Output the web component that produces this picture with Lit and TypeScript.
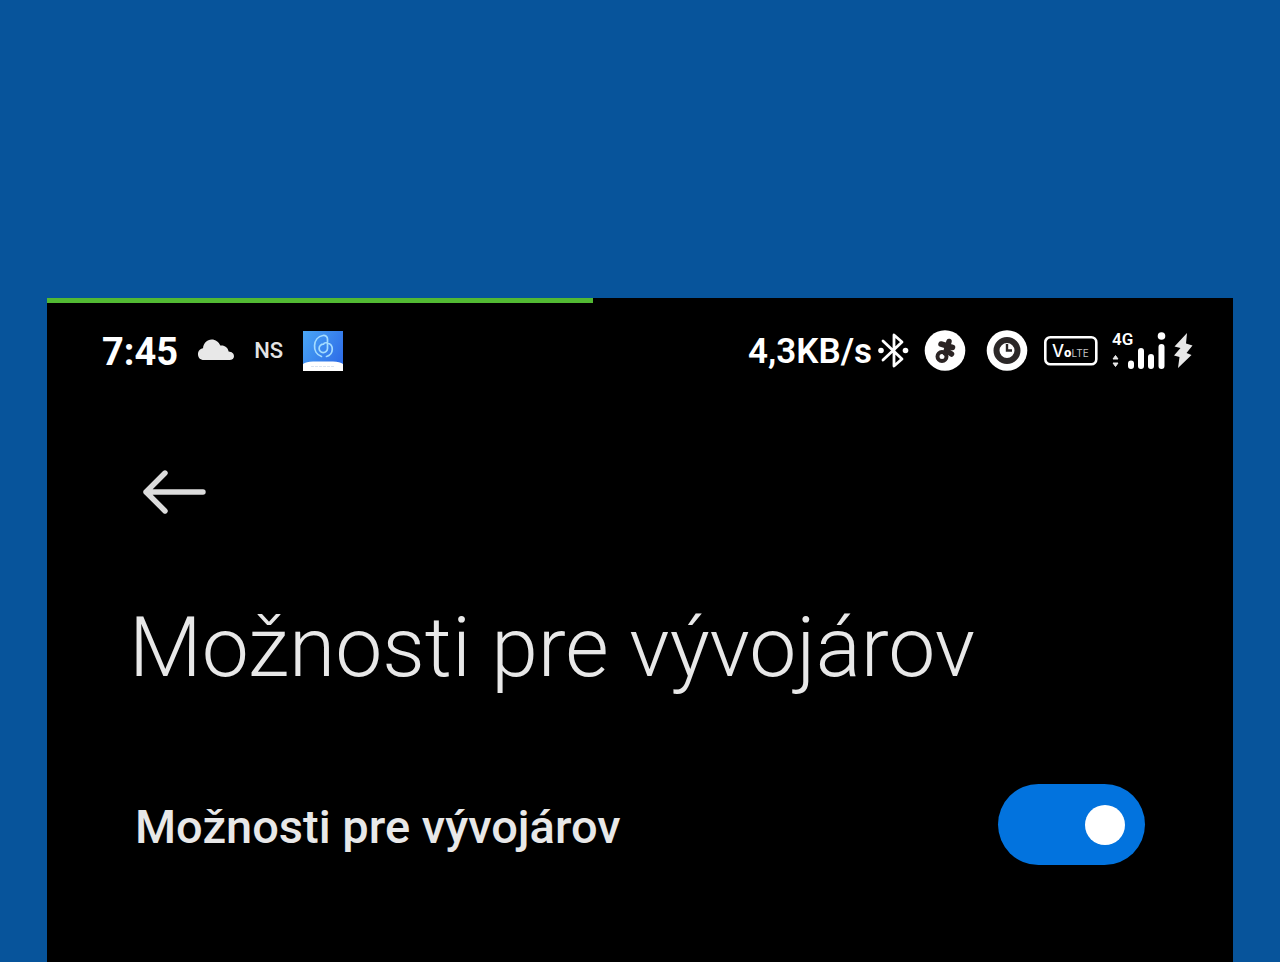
import { LitElement, html, css } from "lit";
import { customElement, state } from "lit/decorators.js";

@customElement("status-bar")
class StatusBar extends LitElement {
  static styles = css`
    :host { display: block; }
    .bar { display: flex; justify-content: space-between; align-items: center; height: 44px; padding: 0 40px 0 55px; color: #fff; }
    .group { display: flex; align-items: center; }
    .time, .speed { padding-top: 2px; line-height: 44px; white-space: nowrap; }
    .time { font-size: 38px; font-weight: 700; }
    .speed { font-size: 35px; font-weight: 600; }
    .ns { font-size: 22px; line-height: 44px; font-weight: 500; color: #e4e4e4; }
    .left { gap: 20px; }
    svg { display: block; flex: none; }
    .bt { margin-left: 5px; }
    .disc { margin-left: 15px; }
    .clock { margin-left: 20px; }
    .volte { margin-left: 16px; }
    .signal { margin-left: 14px; }
    .bolt { margin-left: 6px; }
    .network { font-family: Roboto, sans-serif; }
    .badge { font-family: Inter, sans-serif; }
  `;
  render() {
    return html`
      <div class="bar">
        <div class="group left">
          <span class="time">7:45</span>
          <svg width="36" height="24" viewBox="1 0 36 24" aria-hidden="true">
            <path fill="#e8e8e8" d="M7 21C3 21 1 18.500 1 15.200C1 12 3 9.600 6 9.200C6.500 4.400 10 .6 14.700 .6C18.500 .6 21.800 3 23.300 6.600C27.500 6 31 8.600 31.600 12.600C34.800 12.800 37 14.600 37 17.200C37 19.600 35.200 21 32.500 21Z"/>
          </svg>
          <span class="ns">NS</span>
          <svg width="40" height="40" viewBox="0 0 40 40" aria-hidden="true">
            <defs><linearGradient id="sky" x1="0" y1="0" x2="1" y2="0.600"><stop offset="0" stop-color="#4aa6f5"/><stop offset="1" stop-color="#2f6fe8"/></linearGradient></defs>
            <rect width="40" height="40" fill="url(#sky)"/>
            <path fill="#fff" d="M0 33Q3 30.500 10 30.500H30Q37 30.500 40 33V40H0Z"/>
            <path fill="none" stroke="#a4dcff" stroke-width="1.700" stroke-linecap="round" d="M18.500 25.500C8.500 22.500 9.500 6 20 4.500C22.500 4.200 24.500 5.500 24.500 8V17.500A4.200 4.200 0 1 1 20.500 13.200C21 11.800 22.500 11.500 24.500 12C31 13.500 31 23.500 23.500 25.500"/>
            <path stroke="#dbe4f0" stroke-width="1" stroke-dasharray="3 1" d="M8 35.500H32"/>
          </svg>
        </div>
        <div class="group">
          <span class="speed">4,3KB/s</span>
          <svg class="bt" width="32" height="38" viewBox="0 0 32 38" aria-hidden="true">
            <path fill="none" stroke="#fff" stroke-width="2.800" stroke-linejoin="round" stroke-linecap="round" d="M6 9L25 27L17 34V3L25 10L6 28"/>
            <circle cx="4" cy="18.500" r="2.800" fill="#fff"/><circle cx="28.500" cy="18.500" r="2.800" fill="#fff"/>
          </svg>
          <svg class="disc" width="42" height="42" viewBox="0 0 42 42" aria-hidden="true">
            <circle cx="21" cy="20.500" r="20.300" fill="#fff"/>
            <g fill="none" stroke="#2b2424" stroke-linecap="round">
              <circle cx="18" cy="26.500" r="4.500" stroke-width="4"/>
              <path stroke-width="5.500" d="M21.500 23L25 11.500M17 14L28.500 17.500M23 21L27.500 24"/>
            </g>
          </svg>
          <svg class="clock" width="42" height="42" viewBox="0 0 42 42" aria-hidden="true">
            <circle cx="21" cy="20.500" r="20.300" fill="#fff"/>
            <circle cx="21" cy="20.500" r="10.500" fill="none" stroke="#2b2727" stroke-width="6"/>
            <path fill="none" stroke="#2b2727" stroke-width="2.400" d="M21 14V20.500H26"/>
          </svg>
          <svg class="volte" width="54" height="32" viewBox="0 0 54 32">
            <rect x="1.300" y="2.300" width="51" height="27" rx="5" fill="none" stroke="#fff" stroke-width="2.600"/>
            <text class="badge" x="8" y="22" fill="#fff" font-size="17" font-weight="500">V<tspan font-size="12" font-weight="800">o</tspan><tspan fill="#c4c4c4" font-size="10" font-weight="400">LTE</tspan></text>
          </svg>
          <svg class="signal" width="55" height="46" viewBox="0 -3 55 46">
            <text class="network" x="0" y="14" font-size="17" font-weight="600" fill="#fff">4G</text>
            <path fill="#e8e8e8" stroke="#e8e8e8" stroke-linejoin="round" d="M1 28L3.500 24.500L6 28ZM1 32L3.500 35.500L6 32Z"/>
            <g stroke="#fff" stroke-width="6" stroke-linecap="round"><path d="M19 32.500V35M29 20V35M39 26V35M49.500 16V35"/></g>
            <circle cx="49.500" cy="5" r="3.800" fill="#fff"/>
          </svg>
          <svg class="bolt" width="20" height="36" viewBox="0 0 20 36" aria-hidden="true">
            <path fill="#e8e8e8" d="M14 0L1.500 13.500L7.500 15L1 22.500L6.500 24L5 35L18.500 22L13.500 20L19.500 12.500L13 10.500Z"/>
          </svg>
        </div>
      </div>`;
  }
}

@customElement("app-root")
class AppRoot extends LitElement {
  static styles = css`
    :host { display: block; font-family: Roboto, sans-serif; }
    .stage { box-sizing: border-box; min-height: 100vh; padding: 298px 47px 0; background: #07549b; display: flex; }
    .screen { flex: 1; min-width: 0; background: #000; color: #e8e8e8; }
    .progress { width: 46%; height: 5px; background: #52b933; }
    .status { padding-top: 26px; }
    .content { padding: 95px 88px 0 82px; }
    .back { display: block; margin-left: 11px; padding: 0; border: 0; background: none; color: #dcdcdc; cursor: pointer; }
    .back svg { display: block; }
    h1 { margin: 82px 0 0; font-size: 84px; line-height: 100px; font-weight: 300; }
    .row { display: flex; justify-content: space-between; align-items: center; margin-top: 86px; padding-left: 6px; }
    .label { padding-top: 4px; font-size: 47px; line-height: 56px; font-weight: 500; }
    .switch { appearance: none; flex: none; box-sizing: border-box; margin: 0; width: 147px; height: 81px; padding: 0 20px; border-radius: 41px; background: #4a4a4a; display: flex; align-items: center; cursor: pointer; }
    .switch::before { content: ""; width: 40px; height: 40px; border-radius: 50%; background: #fff; }
    .switch:checked { background: #0273de; justify-content: flex-end; }
  `;
  @state() enabled = true;
  render() {
    return html`
      <div class="stage">
        <main class="screen">
          <div class="progress"></div>
          <status-bar class="status"></status-bar>
          <div class="content">
            <button class="back" aria-label="Späť">
              <svg width="68" height="48" viewBox="0 0 68 48"><path fill="none" stroke="currentColor" stroke-width="5.400" stroke-linecap="round" stroke-linejoin="round" d="M25 5L6 24L25 43M6 24H63"/></svg>
            </button>
            <h1>Možnosti pre vývojárov</h1>
            <div class="row">
              <label class="label" for="dev">Možnosti pre vývojárov</label>
              <input class="switch" id="dev" type="checkbox" role="switch" .checked=${this.enabled}
                @change=${(e: Event) => (this.enabled = (e.target as HTMLInputElement).checked)} />
            </div>
          </div>
        </main>
      </div>`;
  }
}
